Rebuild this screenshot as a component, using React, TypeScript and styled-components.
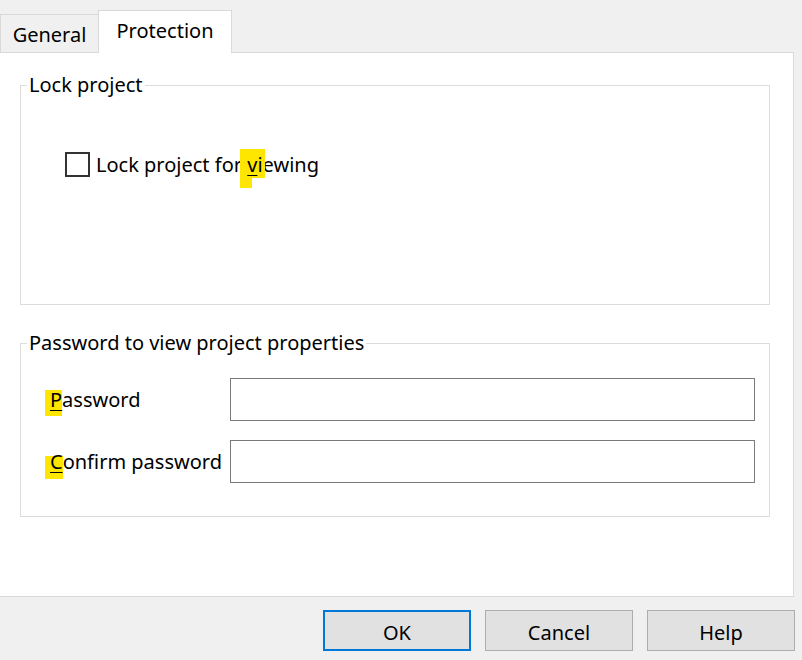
import React from "react"
import styled, { createGlobalStyle, css } from "styled-components"

const GlobalStyle = createGlobalStyle`
    html, body {
        margin: 0;
        padding: 0;
        background: #f0f0f0;
    }
    body {
        font-family: "Noto Sans", "Segoe UI", sans-serif;
        font-size: 20px;
        color: #000000;
        -webkit-font-smoothing: antialiased;
    }
`

const Window = styled.div`
    box-sizing: border-box;
    width: 802px;
    height: 660px;
    display: flex;
    flex-direction: column;
    background: #f0f0f0;
    overflow: hidden;
`

const TabStrip = styled.div`
    display: flex;
    align-items: flex-end;
    height: 52px;
    flex: 0 0 auto;
    position: relative;
    z-index: 1;
`

const Tab = styled.div<{ $active?: boolean }>`
    box-sizing: border-box;
    display: flex;
    align-items: center;
    justify-content: center;
    border: 1px solid #d9d9d9;
    border-bottom: none;
    ${p => p.$active ? css`
        width: 134px;
        height: 43px;
        margin-left: -1px;
        margin-bottom: -1px;
        background: #ffffff;
        padding-bottom: 4px;
    ` : css`
        width: 99px;
        height: 38px;
        background: #f0f0f0;
        padding-top: 2px;
    `}
`

const Panel = styled.div`
    box-sizing: border-box;
    width: 794px;
    flex: 1 1 auto;
    background: #ffffff;
    border: 1px solid #d9d9d9;
    border-left: none;
    padding: 19px 23px 0 20px;
`

const GroupBox = styled.fieldset<{ $gap?: number }>`
    margin: ${p => p.$gap ?? 0}px 0 0 0;
    padding: 0;
    border: 1px solid #dcdcdc;
    min-width: 0;
`

const Legend = styled.legend`
    margin-left: 6px;
    padding: 0 2px;
    line-height: 26px;
`

const CheckBody = styled.div`
    padding: 54px 0 127px 44px;
`

const CheckRow = styled.label`
    display: flex;
    align-items: center;
    gap: 6px;
    height: 25px;
`

const Box = styled.span`
    box-sizing: border-box;
    width: 25px;
    height: 25px;
    border: 2px solid #333333;
    background: #ffffff;
`

const FormBody = styled.div`
    display: grid;
    grid-template-columns: 180px 525px;
    row-gap: 19px;
    align-items: center;
    padding: 22px 0 33px 29px;
`

const FieldLabel = styled.span`
    white-space: nowrap;
`

const TextBox = styled.div`
    box-sizing: border-box;
    height: 43px;
    border: 1px solid #7a7a7a;
    background: #ffffff;
`

// yellow annotation behind the access-key letters
const Mark = styled.span<{ $l: number; $r: number; $t: number; $b: number; $tail?: boolean }>`
    position: relative;
    z-index: 0;
    &::before {
        content: "";
        position: absolute;
        z-index: -1;
        left: ${p => p.$l}px;
        right: ${p => p.$r}px;
        top: ${p => p.$t}px;
        bottom: ${p => p.$b}px;
        background: #ffe600;
    }
    ${p => p.$tail && css`
        &::after {
            content: "";
            position: absolute;
            z-index: -1;
            left: ${p.$l}px;
            width: 12px;
            bottom: ${p.$b - 10}px;
            height: 10px;
            background: #ffe600;
        }
    `}
`

const Key = styled.span`
    text-decoration: underline;
    text-underline-offset: 3px;
    text-decoration-thickness: 1px;
`

const Footer = styled.div`
    display: flex;
    justify-content: flex-end;
    gap: 14px;
    padding: 13px 7px 0 0;
    height: 63px;
    box-sizing: border-box;
    flex: 0 0 auto;
`

const Button = styled.button<{ $default?: boolean }>`
    box-sizing: border-box;
    width: 148px;
    height: 41px;
    background: #e1e1e1;
    font: inherit;
    color: #000000;
    padding: 3px 0 0;
    border: ${p => p.$default ? "2px solid #0078d7" : "1px solid #adadad"};
`

export default function App() {
    return (
        <>
            <GlobalStyle />
            <Window>
                <TabStrip>
                    <Tab>General</Tab>
                    <Tab $active>Protection</Tab>
                </TabStrip>
                <Panel>
                    <GroupBox>
                        <Legend>Lock project</Legend>
                        <CheckBody>
                            <CheckRow>
                                <Box />
                                <span>
                                    Lock project for{" "}
                                    <Mark $l={-7} $r={-2} $t={-2} $b={0} $tail><Key>v</Key>i</Mark>ewing
                                </span>
                            </CheckRow>
                        </CheckBody>
                    </GroupBox>
                    <GroupBox $gap={25}>
                        <Legend>Password to view project properties</Legend>
                        <FormBody>
                            <FieldLabel>
                                <Mark $l={-5} $r={0} $t={4} $b={-3}><Key>P</Key></Mark>assword
                            </FieldLabel>
                            <TextBox />
                            <FieldLabel>
                                <Mark $l={-5} $r={0} $t={8} $b={-4}><Key>C</Key></Mark>onfirm password
                            </FieldLabel>
                            <TextBox />
                        </FormBody>
                    </GroupBox>
                </Panel>
                <Footer>
                    <Button $default>OK</Button>
                    <Button>Cancel</Button>
                    <Button>Help</Button>
                </Footer>
            </Window>
        </>
    )
}
